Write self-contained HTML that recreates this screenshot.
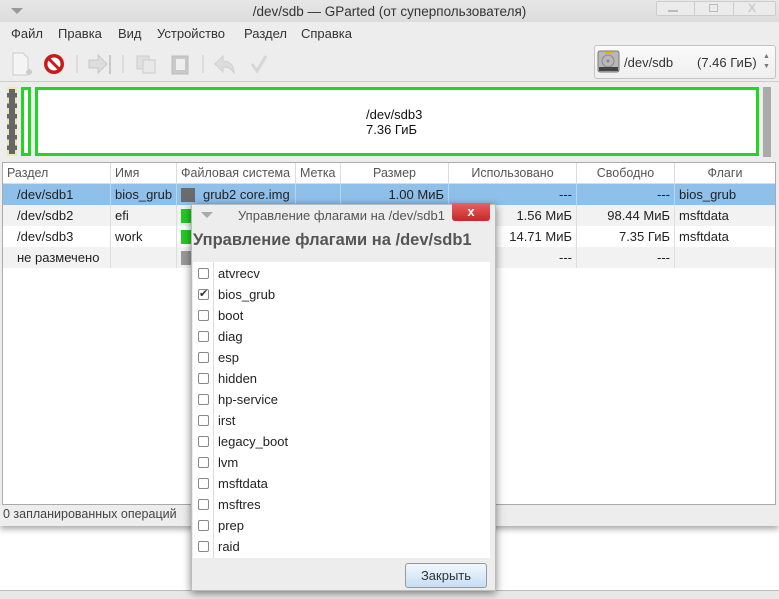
<!DOCTYPE html>
<html><head><meta charset="utf-8"><style>
*{box-sizing:border-box;margin:0;padding:0}
body{width:779px;height:599px;background:#fff;font-family:"Liberation Sans","DejaVu Sans",sans-serif;font-size:13px;color:#222;position:relative;overflow:hidden}
.abs{position:absolute}
.win{left:0;top:0;width:779px;height:526px;background:#ededed;box-shadow:0 3px 6px rgba(0,0,0,.35)}
.title{left:0;top:0;width:779px;height:22px;background:linear-gradient(#e6e6e6,#dcdcdc);text-align:center;line-height:23px;font-size:13.5px;color:#333}
.menu span{position:absolute;top:26px;font-size:13px;color:#333}
.hdr div,.row div{position:absolute;top:0;height:100%;padding:0 4px;white-space:nowrap;overflow:hidden}
.r{text-align:right}
.cb{position:absolute;left:198px;width:11px;height:11px;border:1px solid #888;border-radius:2px;background:#fff}
.fl{position:absolute;left:218px;font-size:13px;color:#222}
</style></head><body>
<div class="abs win"></div>
<div class="abs title">/dev/sdb — GParted (от суперпользователя)</div>
<div class="abs" style="left:11px;top:8px;width:0;height:0;border-left:6px solid transparent;border-right:6px solid transparent;border-top:6px solid #999"></div>
<div class="abs" style="left:656px;top:1px;width:120px;height:15px;border:1px solid #ccc;border-radius:2px;background:#ebebeb"></div>
<div class="abs" style="left:694px;top:1px;width:1px;height:15px;background:#ccc"></div>
<div class="abs" style="left:733px;top:1px;width:1px;height:15px;background:#ccc"></div>
<div class="abs" style="left:668px;top:10px;width:10px;height:2px;background:#bbb"></div>
<div class="abs" style="left:709px;top:4px;width:9px;height:8px;border:1px solid #bbb"></div>
<div class="abs" style="left:748px;top:1px;color:#ccc;font-size:12px;font-weight:bold">X</div>
<div class="menu"><span style="left:11px">Файл</span><span style="left:58px">Правка</span><span style="left:118px">Вид</span><span style="left:157px">Устройство</span><span style="left:244px">Раздел</span><span style="left:301px">Справка</span></div>
<svg class="abs" style="left:0;top:44px" width="290" height="38">
<path d="M13 9h10l5 5v17H13z" fill="#f4f4f4" stroke="#ccc"/><path d="M26 28h6M29 25v6" stroke="#ccc" stroke-width="3"/>
<circle cx="54" cy="20" r="10" fill="#c71a1a"/><circle cx="54" cy="20" r="6.5" fill="#fff"/><path d="M49 15l10 10" stroke="#c71a1a" stroke-width="3"/>
<line x1="77" y1="11" x2="77" y2="29" stroke="#ccc"/>
<path d="M89 16h9v-5l9 9-9 9v-5h-9z" fill="#ddd" stroke="#c8c8c8"/><line x1="110" y1="11" x2="110" y2="30" stroke="#c8c8c8" stroke-width="2"/>
<line x1="123" y1="11" x2="123" y2="29" stroke="#ccc"/>
<rect x="137" y="12" width="12" height="13" fill="#e0e0e0" stroke="#ccc"/><rect x="143" y="16" width="12" height="13" fill="#e8e8e8" stroke="#ccc"/>
<rect x="172" y="12" width="16" height="18" fill="#c8c8c8" stroke="#bbb"/><rect x="176" y="15" width="9" height="11" fill="#eee"/>
<line x1="203" y1="11" x2="203" y2="29" stroke="#ccc"/>
<path d="M215 20l8-8v5c6 0 11 4 11 12-3-5-6-6-11-6v5z" fill="#ddd" stroke="#d0d0d0"/>
<path d="M252 20l5 7 9-15" stroke="#d6d6d6" stroke-width="3" fill="none"/>
</svg>
<div class="abs" style="left:0;top:81px;width:779px;height:1px;background:#ccc"></div>
<div class="abs" style="left:594px;top:45px;width:182px;height:34px;border:1px solid #c4c4c4;border-radius:3px;background:linear-gradient(#fafafa,#efefef)"></div>
<svg class="abs" style="left:597px;top:50px" width="24" height="24"><rect x="1" y="1" width="21" height="21" rx="2" fill="#b8b8b8" stroke="#777"/><rect x="8" y="2" width="8" height="2" fill="#e6b800"/><circle cx="11" cy="11" r="6" fill="none" stroke="#888"/><circle cx="11" cy="11" r="1.5" fill="#888"/><rect x="2" y="17" width="19" height="4" fill="#444"/></svg>
<div class="abs" style="left:624px;top:55px;font-size:13px;color:#333">/dev/sdb</div>
<div class="abs" style="left:697px;top:55px;font-size:13px;color:#333">(7.46 ГиБ)</div>
<div class="abs" style="left:763px;top:52px;font-size:7px;color:#777;line-height:10px">▲<br>▼</div>
<div class="abs" style="left:3px;top:84px;width:773px;height:75px;background:#ededed"></div>
<div class="abs" style="left:7px;top:87px;width:10px;height:69px;background:#666;border:2px dashed #eee8b0"></div>
<div class="abs" style="left:21px;top:87px;width:10px;height:69px;border:3px solid #23d623;background:#fff"></div>
<div class="abs" style="left:35px;top:87px;width:724px;height:69px;border:3px solid #23d623;background:#fff"></div>
<div class="abs" style="left:366px;top:107px;font-size:13px;color:#111;line-height:15px">/dev/sdb3<br>7.36 ГиБ</div>
<div class="abs" style="left:763px;top:87px;width:8px;height:70px;background:#aaa"></div>
<div class="abs" style="left:2px;top:162px;width:774px;height:343px;background:#fff;border:1px solid #aaa"></div>
<div class="abs hdr" style="left:3px;top:163px;width:772px;height:21px;background:#fff;border-bottom:1px solid #ddd;line-height:20px;color:#555;font-size:12.5px">
<div style="left:0;width:108px;border-right:1px solid #ddd">Раздел</div><div style="left:108px;width:66px;border-right:1px solid #ddd">Имя</div><div style="left:174px;width:119px;border-right:1px solid #ddd">Файловая система</div><div style="left:293px;width:45px;border-right:1px solid #ddd">Метка</div><div style="left:338px;width:108px;border-right:1px solid #ddd;text-align:center">Размер</div><div style="left:446px;width:128px;border-right:1px solid #ddd;text-align:center">Использовано</div><div style="left:574px;width:98px;border-right:1px solid #ddd;text-align:center">Свободно</div><div style="left:672px;width:100px;text-align:center">Флаги</div></div>
<div class="abs row" style="left:3px;top:184px;width:772px;height:21px;background:#8fc0ea;line-height:21px">
<div style="left:0;width:108px;padding-left:14px;border-right:1px solid #b8d6f0">/dev/sdb1</div><div style="left:108px;width:66px;border-right:1px solid #b8d6f0">bios_grub</div><div style="left:174px;width:119px;border-right:1px solid #b8d6f0"><span style="display:inline-block;width:14px;height:14px;background:#6b6b6b;vertical-align:-3px;margin-right:8px"></span>grub2 core.img</div><div style="left:293px;width:45px;border-right:1px solid #b8d6f0"></div><div class="r" style="left:338px;width:108px;border-right:1px solid #b8d6f0">1.00 МиБ</div><div class="r" style="left:446px;width:128px;border-right:1px solid #b8d6f0">---</div><div class="r" style="left:574px;width:98px;border-right:1px solid #b8d6f0">---</div><div style="left:672px;width:100px">bios_grub</div></div>
<div class="abs row" style="left:3px;top:205px;width:772px;height:21px;background:#f2f2f2;line-height:21px">
<div style="left:0;width:108px;padding-left:14px;border-right:1px solid #ddd">/dev/sdb2</div><div style="left:108px;width:66px;border-right:1px solid #ddd">efi</div><div style="left:174px;width:119px"><span style="display:inline-block;width:14px;height:14px;background:#22cc22;vertical-align:-3px"></span></div><div class="r" style="left:446px;width:128px;border-right:1px solid #ddd">1.56 МиБ</div><div class="r" style="left:574px;width:98px;border-right:1px solid #ddd">98.44 МиБ</div><div style="left:672px;width:100px">msftdata</div></div>
<div class="abs row" style="left:3px;top:226px;width:772px;height:21px;background:#fff;line-height:21px">
<div style="left:0;width:108px;padding-left:14px;border-right:1px solid #ddd">/dev/sdb3</div><div style="left:108px;width:66px;border-right:1px solid #ddd">work</div><div style="left:174px;width:119px"><span style="display:inline-block;width:14px;height:14px;background:#22cc22;vertical-align:-3px"></span></div><div class="r" style="left:446px;width:128px;border-right:1px solid #ddd">14.71 МиБ</div><div class="r" style="left:574px;width:98px;border-right:1px solid #ddd">7.35 ГиБ</div><div style="left:672px;width:100px">msftdata</div></div>
<div class="abs row" style="left:3px;top:247px;width:772px;height:21px;background:#f2f2f2;line-height:21px">
<div style="left:0;width:108px;padding-left:14px;border-right:1px solid #ddd">не размечено</div><div style="left:108px;width:66px;border-right:1px solid #ddd"></div><div style="left:174px;width:119px"><span style="display:inline-block;width:14px;height:14px;background:#999;vertical-align:-3px"></span></div><div class="r" style="left:446px;width:128px;border-right:1px solid #ddd">---</div><div class="r" style="left:574px;width:98px;border-right:1px solid #ddd">---</div><div style="left:672px;width:100px"></div></div>
<div class="abs" style="left:3px;top:507px;font-size:12.5px;color:#444">0 запланированных операций</div>
<div class="abs" style="left:0;top:590px;width:779px;height:9px;background:#e8e8e8;border-top:1px solid #bbb"></div>
<div class="abs" style="left:191px;top:204px;width:305px;height:387px;background:#ededed;box-shadow:0 2px 8px rgba(0,0,0,.5);border:1px solid #bbb"></div>
<div class="abs" style="left:201px;top:212px;width:0;height:0;border-left:6px solid transparent;border-right:6px solid transparent;border-top:6px solid #aaa"></div>
<div class="abs" style="left:238px;top:208px;font-size:13px;color:#555">Управление флагами на /dev/sdb1</div>
<div class="abs" style="left:452px;top:203px;width:38px;height:18px;background:linear-gradient(#e86060,#c62828);border-radius:0 0 3px 3px;color:#fff;font-weight:bold;text-align:center;line-height:17px;font-size:13px">x</div>
<div class="abs" style="left:193px;top:231px;font-size:16.5px;font-weight:bold;color:#555">Управление флагами на /dev/sdb1</div>
<div class="abs" style="left:193px;top:262px;width:297px;height:296px;background:#fff"></div>
<div class="abs" style="left:213px;top:262px;width:1px;height:296px;background:#ddd"></div>
<div class="cb" style="top:268px"></div><div class="fl" style="top:266px">atvrecv</div>
<div class="cb" style="top:289px;color:#333;font-size:11px;line-height:9px;text-align:center">✔</div><div class="fl" style="top:287px">bios_grub</div>
<div class="cb" style="top:310px"></div><div class="fl" style="top:308px">boot</div>
<div class="cb" style="top:331px"></div><div class="fl" style="top:329px">diag</div>
<div class="cb" style="top:352px"></div><div class="fl" style="top:350px">esp</div>
<div class="cb" style="top:373px"></div><div class="fl" style="top:371px">hidden</div>
<div class="cb" style="top:394px"></div><div class="fl" style="top:392px">hp-service</div>
<div class="cb" style="top:415px"></div><div class="fl" style="top:413px">irst</div>
<div class="cb" style="top:436px"></div><div class="fl" style="top:434px">legacy_boot</div>
<div class="cb" style="top:457px"></div><div class="fl" style="top:455px">lvm</div>
<div class="cb" style="top:478px"></div><div class="fl" style="top:476px">msftdata</div>
<div class="cb" style="top:499px"></div><div class="fl" style="top:497px">msftres</div>
<div class="cb" style="top:520px"></div><div class="fl" style="top:518px">prep</div>
<div class="cb" style="top:541px"></div><div class="fl" style="top:539px">raid</div>
<div class="abs" style="left:405px;top:563px;width:82px;height:25px;border:1px solid #999;border-radius:3px;background:linear-gradient(#f2f8fd,#c6def3);text-align:center;line-height:23px;font-size:13px;color:#333">Закрыть</div>
</body></html>
